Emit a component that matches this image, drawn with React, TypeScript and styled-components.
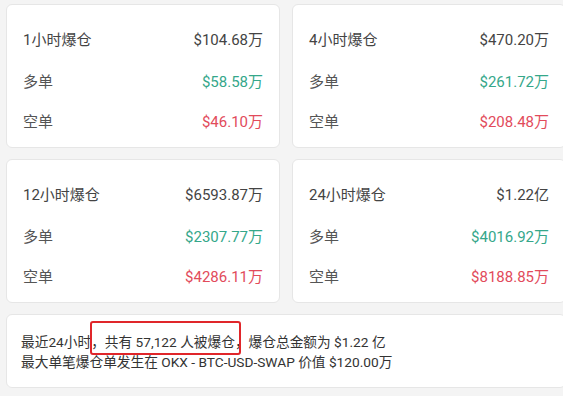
import React from 'react';
import styled, { createGlobalStyle } from 'styled-components';

const GlobalStyle = createGlobalStyle`
    html, body {
        margin:0;
        padding:0;
        background:#f4f4f4;
        overflow:hidden;
    }
    body {
        font-family:Roboto, "Noto Sans CJK SC", sans-serif;
    }
`

const Page = styled.div`
    width:580px;
    padding:4px 0 0 6px;
    box-sizing:border-box;
    display:flex;
    flex-direction:column;
    gap:11px;
`
const Grid = styled.div`
    display:grid;
    grid-template-columns:274px 274px;
    column-gap:12px;
    row-gap:11px;
`
const Card = styled.div`
    height:144px;
    background:#fff;
    border:1px solid #e6e6e6;
    border-radius:6px;
    padding:11px 16px 8px 16px;
    box-sizing:border-box;
`
const Row = styled.div<{ $head?: boolean }>`
    display:flex;
    justify-content:space-between;
    align-items:center;
    height:${p => (p.$head ? 44 : 40)}px;
    font-size:15px;
`
const Label = styled.span<{ $head?: boolean }>`
    color:${p => (p.$head ? '#444' : '#555')};
`
const Value = styled.span<{ $tone?: 'up' | 'down' }>`
    color:${p => (p.$tone === 'up' ? '#35a78a' : p.$tone === 'down' ? '#e24b5b' : '#444')};
`
const Summary = styled.div`
    width:560px;
    height:74px;
    background:#fff;
    border:1px solid #e6e6e6;
    border-radius:6px;
    padding:17px 14px 0 14px;
    box-sizing:border-box;
    font-size:13.7px;
    line-height:20px;
    color:#333;
    white-space:nowrap;
`
// red annotation frame drawn over the text
const Highlight = styled.span`
    position:relative;
    display:inline-block;
    &::after {
        content:'';
        position:absolute;
        top:-11px;
        bottom:-3px;
        left:-15px;
        right:-6px;
        border:2px solid #e0262a;
        border-radius:3px;
    }
`

const data = [
    { title: '1小时爆仓', total: '$104.68万', long: '$58.58万', short: '$46.10万' },
    { title: '4小时爆仓', total: '$470.20万', long: '$261.72万', short: '$208.48万' },
    { title: '12小时爆仓', total: '$6593.87万', long: '$2307.77万', short: '$4286.11万' },
    { title: '24小时爆仓', total: '$1.22亿', long: '$4016.92万', short: '$8188.85万' },
]

export default function App() {
    return (
        <>
            <GlobalStyle />
            <Page>
                <Grid>
                    {data.map(d => (
                        <Card key={d.title}>
                            <Row $head>
                                <Label $head>{d.title}</Label>
                                <Value>{d.total}</Value>
                            </Row>
                            <Row>
                                <Label>多单</Label>
                                <Value $tone="up">{d.long}</Value>
                            </Row>
                            <Row>
                                <Label>空单</Label>
                                <Value $tone="down">{d.short}</Value>
                            </Row>
                        </Card>
                    ))}
                </Grid>
                <Summary>
                    <div>
                        最近24小时，<Highlight>共有 57,122 人被爆仓</Highlight>，爆仓总金额为 $1.22 亿
                    </div>
                    <div>最大单笔爆仓单发生在 OKX - BTC-USD-SWAP 价值 $120.00万</div>
                </Summary>
            </Page>
        </>
    )
}
